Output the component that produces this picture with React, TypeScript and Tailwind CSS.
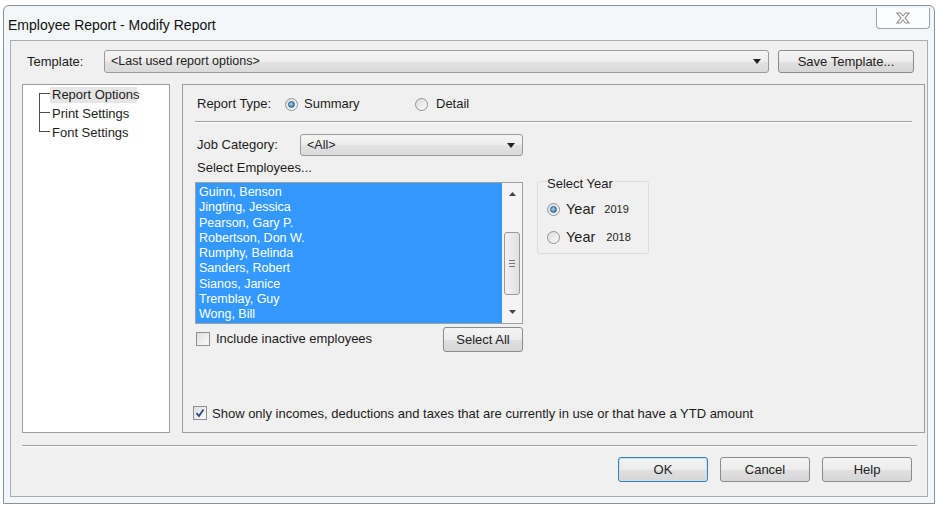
import React from "react";

const employees = [
  "Guinn, Benson",
  "Jingting, Jessica",
  "Pearson, Gary P.",
  "Robertson, Don W.",
  "Rumphy, Belinda",
  "Sanders, Robert",
  "Sianos, Janice",
  "Tremblay, Guy",
  "Wong, Bill",
];

const treeItems = ["Report Options", "Print Settings", "Font Settings"];

function Radio({ checked }: { checked?: boolean }) {
  return (
    <span className="inline-flex h-[13px] w-[13px] shrink-0 items-center justify-center rounded-full border border-[#8f9396] bg-[linear-gradient(135deg,#dcdcdc,#fafafa)]">
      {checked && (
        <span className="h-[7px] w-[7px] rounded-full border border-[#2d5f86] bg-[radial-gradient(circle_at_40%_40%,#a9d3f2,#2b5f8c)]" />
      )}
    </span>
  );
}

function Checkbox({ checked }: { checked?: boolean }) {
  return (
    <span className="inline-flex h-[14px] w-[14px] shrink-0 items-center justify-center border border-[#8f8f8f] bg-[linear-gradient(135deg,#dedede,#fbfbfb)]">
      {checked && (
        <svg width="10" height="10" viewBox="0 0 10 10">
          <path d="M1.5 5.2 L4 8 L8.5 1.5" fill="none" stroke="#2c4a80" strokeWidth="1.8" />
        </svg>
      )}
    </span>
  );
}

function Button({
  children,
  className = "",
  focused,
}: {
  children: React.ReactNode;
  className?: string;
  focused?: boolean;
}) {
  return (
    <div
      className={`flex items-center justify-center rounded-[3px] border bg-[linear-gradient(#f4f4f4_0%,#ececec_50%,#e0e0e0_51%,#d6d6d6_100%)] text-[13px] text-[#222] ${
        focused ? "border-[#3c7fb1] shadow-[inset_0_0_0_1px_#bfe3f7]" : "border-[#8a8a8a]"
      } ${className}`}
    >
      {children}
    </div>
  );
}

function Combo({ text, className = "" }: { text: string; className?: string }) {
  return (
    <div
      className={`flex items-center rounded-[3px] border border-[#9a9a9a] bg-[linear-gradient(#f5f5f5_0%,#ededed_50%,#e2e2e2_51%,#dadada_100%)] pl-[6px] pr-[7px] text-[12.5px] text-[#222] ${className}`}
    >
      <span className="flex-1">{text}</span>
      <svg width="8" height="5" viewBox="0 0 8 5">
        <path d="M0 0 H8 L4 5 Z" fill="#222" />
      </svg>
    </div>
  );
}

export default function App() {
  return (
    <div className="h-[507px] w-[936px] overflow-hidden bg-white font-['Liberation_Sans',Arial,sans-serif] text-[13px] text-[#1c1c1c]">
      <div className="ml-[3px] mt-[5px] flex h-[499px] w-[932px] flex-col rounded-t-[6px] border border-[#8b9097] bg-[#f4f7fa]">
        {/* Title bar */}
        <div className="flex h-[34px] items-start justify-between">
          <span className="mt-[9px] pl-[4px] text-[14px] text-[#111]">Employee Report - Modify Report</span>
          <div className="mr-[4px] mt-[2px] flex h-[21px] w-[54px] items-center justify-center rounded-b-[4px] border border-t-0 border-[#9da3aa] bg-[#fbfcfd]">
            <svg width="14" height="12" viewBox="0 0 14 12">
              <path
                d="M1 1 H4.5 L7 4 L9.5 1 H13 L9 6 L13 11 H9.5 L7 8 L4.5 11 H1 L5 6 Z"
                fill="#fff"
                stroke="#8d8d8d"
                strokeWidth="1.1"
              />
            </svg>
          </div>
        </div>

        {/* Client area */}
        <div className="mx-[6px] mb-[6px] flex flex-1 flex-col border border-[#a9adb2] bg-[#f0f0f0]">
          {/* Template row */}
          <div className="mt-[9px] flex h-[23px] items-center">
            <span className="w-[93px] pl-[16px]">Template:</span>
            <Combo text="<Last used report options>" className="h-[23px] w-[665px]" />
            <Button className="ml-[9px] h-[23px] w-[136px]">Save Template...</Button>
          </div>

          {/* Panels */}
          <div className="mt-[11px] flex h-[349px]">
            {/* Tree */}
            <div className="ml-[11px] w-[148px] border border-[#9c9c9c] bg-white pl-[16px]">
              {treeItems.map((item, i) => (
                <div key={item} className="flex h-[19px]">
                  <div className="flex w-[11px] flex-col">
                    <div
                      className={`h-[9px] border-b border-[#4d4d4d] ${i > 0 ? "border-l" : ""}`}
                    />
                    <div className={`flex-1 ${i < 2 ? "border-l border-[#4d4d4d]" : ""}`} />
                  </div>
                  <span
                    className={`flex h-[16px] items-center self-center whitespace-nowrap px-[2px] ${
                      i === 0 ? "w-[87px] bg-[#e6e6e6]" : ""
                    }`}
                  >
                    {item}
                  </span>
                </div>
              ))}
            </div>

            {/* Options panel */}
            <div className="ml-[12px] flex w-[743px] flex-col border border-[#9c9c9c] bg-[#f0f0f0]">
              <div className="mt-[9px] flex h-[20px] items-center pl-[14px]">
                <span className="w-[88px]">Report Type:</span>
                <Radio checked />
                <span className="ml-[6px] w-[111px]">Summary</span>
                <Radio />
                <span className="ml-[8px]">Detail</span>
              </div>
              <div className="mx-[12px] mt-[7px] h-[2px] border-t border-b border-t-[#a0a0a0] border-b-white" />

              <div className="mt-[11px] flex h-[22px] items-center pl-[14px]">
                <span className="w-[103px]">Job Category:</span>
                <Combo text="<All>" className="h-[22px] w-[223px]" />
              </div>
              <div className="mt-[4px] pl-[14px] leading-[16px]">Select Employees...</div>

              <div className="mt-[6px] flex pl-[12px]">
                <div className="flex w-[328px] flex-col">
                  {/* Listbox */}
                  <div className="flex h-[142px] border border-[#a0a0a0] bg-white">
                    <div className="flex-1 bg-[#3399ff] pl-[3px] pt-[2px] text-[12.5px] leading-[15.25px] text-white">
                      {employees.map((e) => (
                        <div key={e}>{e}</div>
                      ))}
                    </div>
                    <div className="flex w-[20px] flex-col items-center bg-[#f4f4f4] py-[3px]">
                      <svg width="7" height="4" viewBox="0 0 7 4" className="mt-[6px]">
                        <path d="M0 4 L3.5 0 L7 4 Z" fill="#444" />
                      </svg>
                      <div className="mt-[36px] flex h-[63px] w-[16px] flex-col items-center justify-center gap-[2px] rounded-[3px] border border-[#9a9a9a] bg-[linear-gradient(90deg,#f2f2f2,#e0e0e0)]">
                        <span className="h-px w-[6px] bg-[#777]" />
                        <span className="h-px w-[6px] bg-[#777]" />
                        <span className="h-px w-[6px] bg-[#777]" />
                      </div>
                      <div className="flex-1" />
                      <svg width="7" height="4" viewBox="0 0 7 4" className="mb-[6px]">
                        <path d="M0 0 H7 L3.5 4 Z" fill="#444" />
                      </svg>
                    </div>
                  </div>

                  <div className="mt-[3px] flex items-start justify-between pl-[1px]">
                    <div className="mt-[2px] flex items-center">
                      <Checkbox />
                      <span className="ml-[6px]">Include inactive employees</span>
                    </div>
                    <Button className="h-[25px] w-[80px]">Select All</Button>
                  </div>
                </div>

                {/* Select Year group */}
                <div className="ml-[14px] mt-[-1px] h-[73px] w-[112px] rounded-[3px] border border-[#dcdcdc] pl-[9px]">
                  <div className="mt-[-8px] w-fit bg-[#f0f0f0] pr-[2px] text-[13px]">Select Year</div>
                  <div className="mt-[7px] flex h-[18px] items-center">
                    <Radio checked />
                    <span className="ml-[6px] text-[14.5px]">Year</span>
                    <span className="ml-[9px] text-[11px]">2019</span>
                  </div>
                  <div className="mt-[10px] flex h-[18px] items-center">
                    <Radio />
                    <span className="ml-[6px] text-[14.5px]">Year</span>
                    <span className="ml-[11px] text-[11px]">2018</span>
                  </div>
                </div>
              </div>

              <div className="mb-[9px] mt-auto flex items-center pl-[10px]">
                <Checkbox checked />
                <span className="ml-[5px]">
                  Show only incomes, deductions and taxes that are currently in use or that have a YTD amount
                </span>
              </div>
            </div>
          </div>

          {/* Separator */}
          <div className="ml-[11px] mt-[12px] h-[2px] w-[895px] border-t border-b border-t-[#a0a0a0] border-b-white" />

          {/* Buttons */}
          <div className="mt-[10px] flex justify-end gap-[12px] pr-[15px]">
            <Button focused className="h-[25px] w-[90px]">OK</Button>
            <Button className="h-[25px] w-[90px]">Cancel</Button>
            <Button className="h-[25px] w-[90px]">Help</Button>
          </div>
        </div>
      </div>
    </div>
  );
}
